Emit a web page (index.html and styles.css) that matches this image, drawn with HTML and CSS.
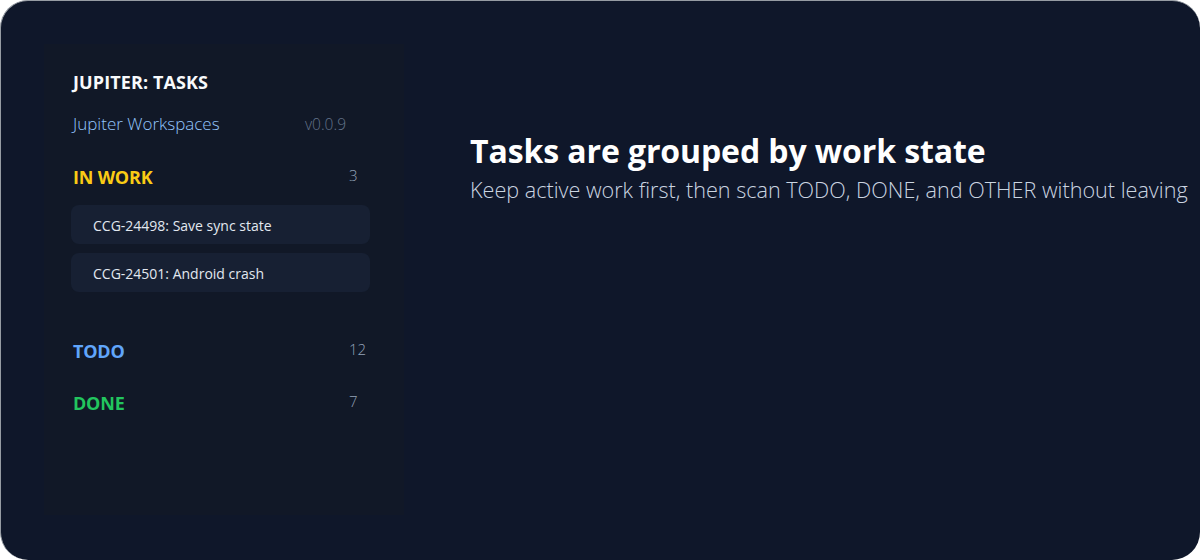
FILE: index.html
```html
<!doctype html>
<html>
<head>
<meta charset="utf-8">
<title>Jupiter: Tasks</title>
<link rel="stylesheet" href="styles.css">
</head>
<body>
 <div class="window">
	<aside class="sidebar">
		<h1 class="app-title">JUPITER: TASKS</h1>
		<div class="workspace">
			<span class="ws-name">Jupiter Workspaces</span>
			<span class="version">v0.0.9</span>
		</div>

		<section class="group in-work">
			<div class="group-head">
				<span class="group-name">IN WORK</span>
				<span class="count">3</span>
			</div>
			<ul class="task-list">
				<li class="task">CCG-24498: Save sync state</li>
				<li class="task">CCG-24501: Android crash</li>
			</ul>
		</section>

		<section class="group todo">
			<div class="group-head">
				<span class="group-name">TODO</span>
				<span class="count">12</span>
			</div>
		</section>

		<section class="group done">
			<div class="group-head">
				<span class="group-name">DONE</span>
				<span class="count">7</span>
			</div>
		</section>
	</aside>

	<main class="content">
		<h2 class="headline">Tasks are grouped by work state</h2>
		<p class="lead">Keep active work first, then scan TODO, DONE, and OTHER without leaving</p>
	</main>
 </div>
</body>
</html>
```

FILE: styles.css
```css
html,body,h1,h2,p,ul,li{ margin: 0; padding: 0;}
ul,li{ list-style: none;}
body{ background: #fff; font-family: "Open Sans", "Noto Sans", sans-serif; width: 1200px; height: 560px; overflow: hidden;}

.window{ width: 1200px; height: 560px; box-sizing: border-box; display: flex; gap: 66px; padding: 43px 0 0 43px; background: #0f172a; border-top: 1px solid #969ca3; border-left: 1px solid #969ca3; border-radius: 28px; overflow: hidden;}

/* sidebar */
.sidebar{ flex: none; width: 360px; height: 471px; box-sizing: border-box; padding: 28px 34px 0 27px; background: #111827;}
.app-title{ padding-left: 2px; font-size: 18px; line-height: 20px; font-weight: 700; color: #f8fafc; letter-spacing: 0.1px;}
.workspace{ display: flex; justify-content: space-between; align-items: center; margin: 22px 24px 0 2px; line-height: 20px;}
.ws-name{ color: #93c5fd; font-size: 17px; font-weight: 300;}
.version{ color: #64748b; font-size: 15.5px; font-weight: 300;}

.group-head{ display: flex; justify-content: space-between; padding-left: 2px; line-height: 20px;}
.group-name{ font-size: 18px; font-weight: 700; letter-spacing: -0.2px;}
.count{ width: 21px; margin-top: -2px; font-size: 15px; font-weight: 300; color: #94a3b8;}
.in-work{ margin-top: 33px;}
.in-work .group-name{ color: #facc15;}
.todo{ margin-top: 49px;}
.todo .group-name{ color: #60a5fa;}
.done{ margin-top: 32px;}
.done .group-name{ color: #22c55e;}

.task-list{ display: flex; flex-direction: column; gap: 9px; margin-top: 18px;}
.task{ height: 39px; box-sizing: border-box; padding: 2px 22px 0; border-radius: 8px; background: #172033; color: #e2e8f0; font-size: 14px; line-height: 37px; white-space: nowrap;}

/* main */
.content{ flex: none; padding-top: 87px; white-space: nowrap;}
.headline{ font-size: 32px; line-height: 40px; font-weight: 700; color: #fff; letter-spacing: -0.1px;}
.lead{ margin-top: 5px; font-size: 21.6px; line-height: 28px; font-weight: 300; color: #cbd5e1;}
```
